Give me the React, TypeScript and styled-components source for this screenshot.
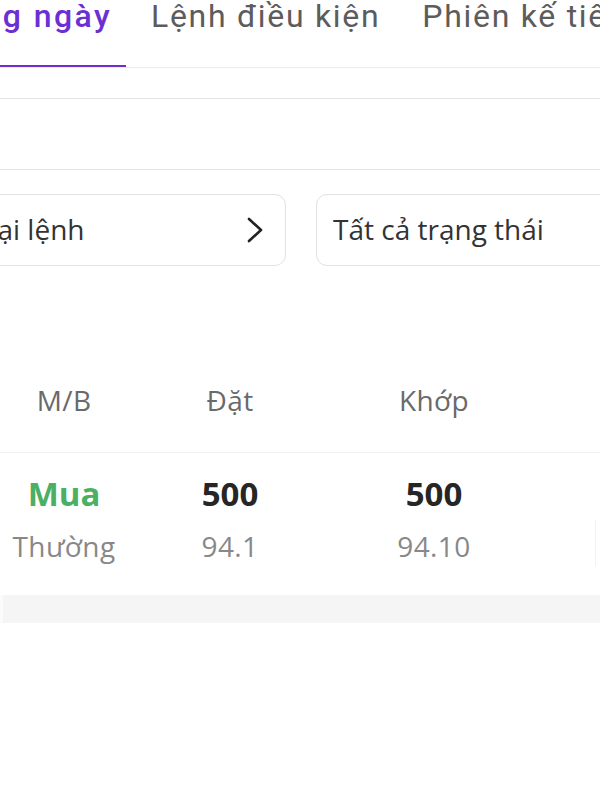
import React from 'react'
import styled, { createGlobalStyle } from 'styled-components'

const GlobalStyle = createGlobalStyle`
  html, body {
    margin: 0;
    padding: 0;
    background: #ffffff;
  }
  body {
    width: 600px;
    height: 800px;
    overflow: hidden;
    font-family: "Open Sans", "Noto Sans", sans-serif;
  }
`

type Tab = { label: string; active?: boolean; width?: number }

// the strip is scrolled: the first tab is only partly in view
const tabs: Tab[] = [
  { label: 'Lệnh trong ngày', active: true, width: 126 },
  { label: 'Lệnh điều kiện' },
  { label: 'Phiên kế tiếp' },
]

type Order = {
  side: string
  kind: string
  qty: string
  price: string
  matchedQty: string
  matchedPrice: string
}

const orders: Order[] = [
  { side: 'Mua', kind: 'Thường', qty: '500', price: '94.1', matchedQty: '500', matchedPrice: '94.10' },
]

export default function App() {
  return (
    <Screen>
      <GlobalStyle />
      <TabBar>
        {tabs.map(tab => (
          <TabItem key={tab.label} $active={tab.active} $width={tab.width}>
            <TabLabel $active={tab.active}>{tab.label}</TabLabel>
          </TabItem>
        ))}
      </TabBar>

      <Spacer $height={30} />
      <SearchStrip />

      <FilterRow>
        <FilterBox>
          <FilterText>Loại lệnh</FilterText>
          <Chevron width="16" height="26" viewBox="0 0 16 26">
            <polyline points="2,2 14,13 2,24" fill="none" stroke="#222" strokeWidth="2.6" strokeLinecap="round" strokeLinejoin="round" />
          </Chevron>
        </FilterBox>
        <FilterBox>
          <FilterText>Tất cả trạng thái</FilterText>
        </FilterBox>
      </FilterRow>

      <Table>
        <HeaderRow>
          <HeaderCell>M/B</HeaderCell>
          <HeaderCell>Đặt</HeaderCell>
          <HeaderCell>Khớp</HeaderCell>
          <HeaderCell />
        </HeaderRow>
        {orders.map(order => (
          <OrderRow key={order.side + order.qty}>
            <Cell>
              <SideText>{order.side}</SideText>
              <SubText>{order.kind}</SubText>
            </Cell>
            <Cell>
              <MainText>{order.qty}</MainText>
              <SubText>{order.price}</SubText>
            </Cell>
            <Cell>
              <MainText>{order.matchedQty}</MainText>
              <SubText>{order.matchedPrice}</SubText>
            </Cell>
            <EdgeCell />
          </OrderRow>
        ))}
        <FooterBand />
      </Table>
    </Screen>
  )
}

const Screen = styled.div`
  width: 600px;
  height: 800px;
  background: #ffffff;
  overflow: hidden;
  display: flex;
  flex-direction: column;
`

const TabBar = styled.div`
  display: flex;
  height: 68px;
  border-bottom: 1px solid #ececec;
  box-sizing: border-box;
  overflow: hidden;
  gap: 8px;
  flex-shrink: 0;
`

const TabItem = styled.div<{ $active?: boolean; $width?: number }>`
  flex: 0 0 auto;
  width: ${p => (p.$width ? `${p.$width}px` : 'auto')};
  box-sizing: border-box;
  display: flex;
  justify-content: ${p => (p.$width ? 'flex-end' : 'flex-start')};
  padding: 0 17px;
  padding-right: ${p => (p.$width ? '14px' : '17px')};
  overflow: hidden;
  border-bottom: 3px solid ${p => (p.$active ? '#6b2fd3' : 'transparent')};
  margin-bottom: -1px;
  white-space: nowrap;
`

const TabLabel = styled.span<{ $active?: boolean }>`
  font-family: Roboto, "Noto Sans", sans-serif;
  font-size: 32px;
  letter-spacing: ${p => (p.$active ? '2.4px' : '1.7px')};
  line-height: 40px;
  margin-top: -4px;
  font-weight: ${p => (p.$active ? 500 : 400)};
  color: ${p => (p.$active ? '#6b2fd3' : '#5c5c5c')};
  flex-shrink: 0;
`

const Spacer = styled.div<{ $height: number }>`
  height: ${p => p.$height}px;
  flex-shrink: 0;
`

const SearchStrip = styled.div`
  height: 72px;
  box-sizing: border-box;
  border-top: 1px solid #e4e4e4;
  border-bottom: 1px solid #e4e4e4;
  flex-shrink: 0;
`

const FilterRow = styled.div`
  display: grid;
  grid-template-columns: 337px 320px;
  gap: 30px;
  margin-left: -51px;
  padding-top: 24px;
  flex-shrink: 0;
`

const FilterBox = styled.div`
  height: 72px;
  box-sizing: border-box;
  border: 1.5px solid #e2e2e2;
  border-radius: 11px;
  display: flex;
  align-items: center;
  justify-content: space-between;
  padding: 0 22px 0 16px;
  overflow: hidden;
`

const FilterText = styled.span`
  font-size: 28px;
  color: #333333;
  white-space: nowrap;
  margin-top: -2px;
`

const Chevron = styled.svg`
  flex-shrink: 0;
`

const Table = styled.div`
  margin-top: 64px;
  display: flex;
  flex-direction: column;
`

const columns = '128px 204px 204px 64px'

const HeaderRow = styled.div`
  display: grid;
  grid-template-columns: ${columns};
  padding: 50px 0 32px;
  border-bottom: 1px solid #f0f0f0;
`

const HeaderCell = styled.div`
  text-align: center;
  font-size: 28px;
  letter-spacing: 0.4px;
  line-height: 40px;
  color: #6a6a6a;
`

const OrderRow = styled.div`
  display: grid;
  grid-template-columns: ${columns};
  padding: 19px 0 29px;
`

const Cell = styled.div`
  display: flex;
  flex-direction: column;
  align-items: center;
  gap: 10px;
`

const EdgeCell = styled.div`
  justify-self: end;
  width: 4px;
  height: 46px;
  margin-top: 48px;
  border-left: 1px solid #f2f2f2;
`

const MainText = styled.div`
  font-size: 33px;
  font-weight: 700;
  color: #262626;
  line-height: 44px;
`

const SideText = styled(MainText)`
  color: #4caf63;
`

const SubText = styled.div`
  font-size: 28px;
  letter-spacing: 0.4px;
  color: #888888;
  line-height: 40px;
`

const FooterBand = styled.div`
  height: 28px;
  background: #f5f5f5;
  border-left: 3px solid #fbfbfb;
`
